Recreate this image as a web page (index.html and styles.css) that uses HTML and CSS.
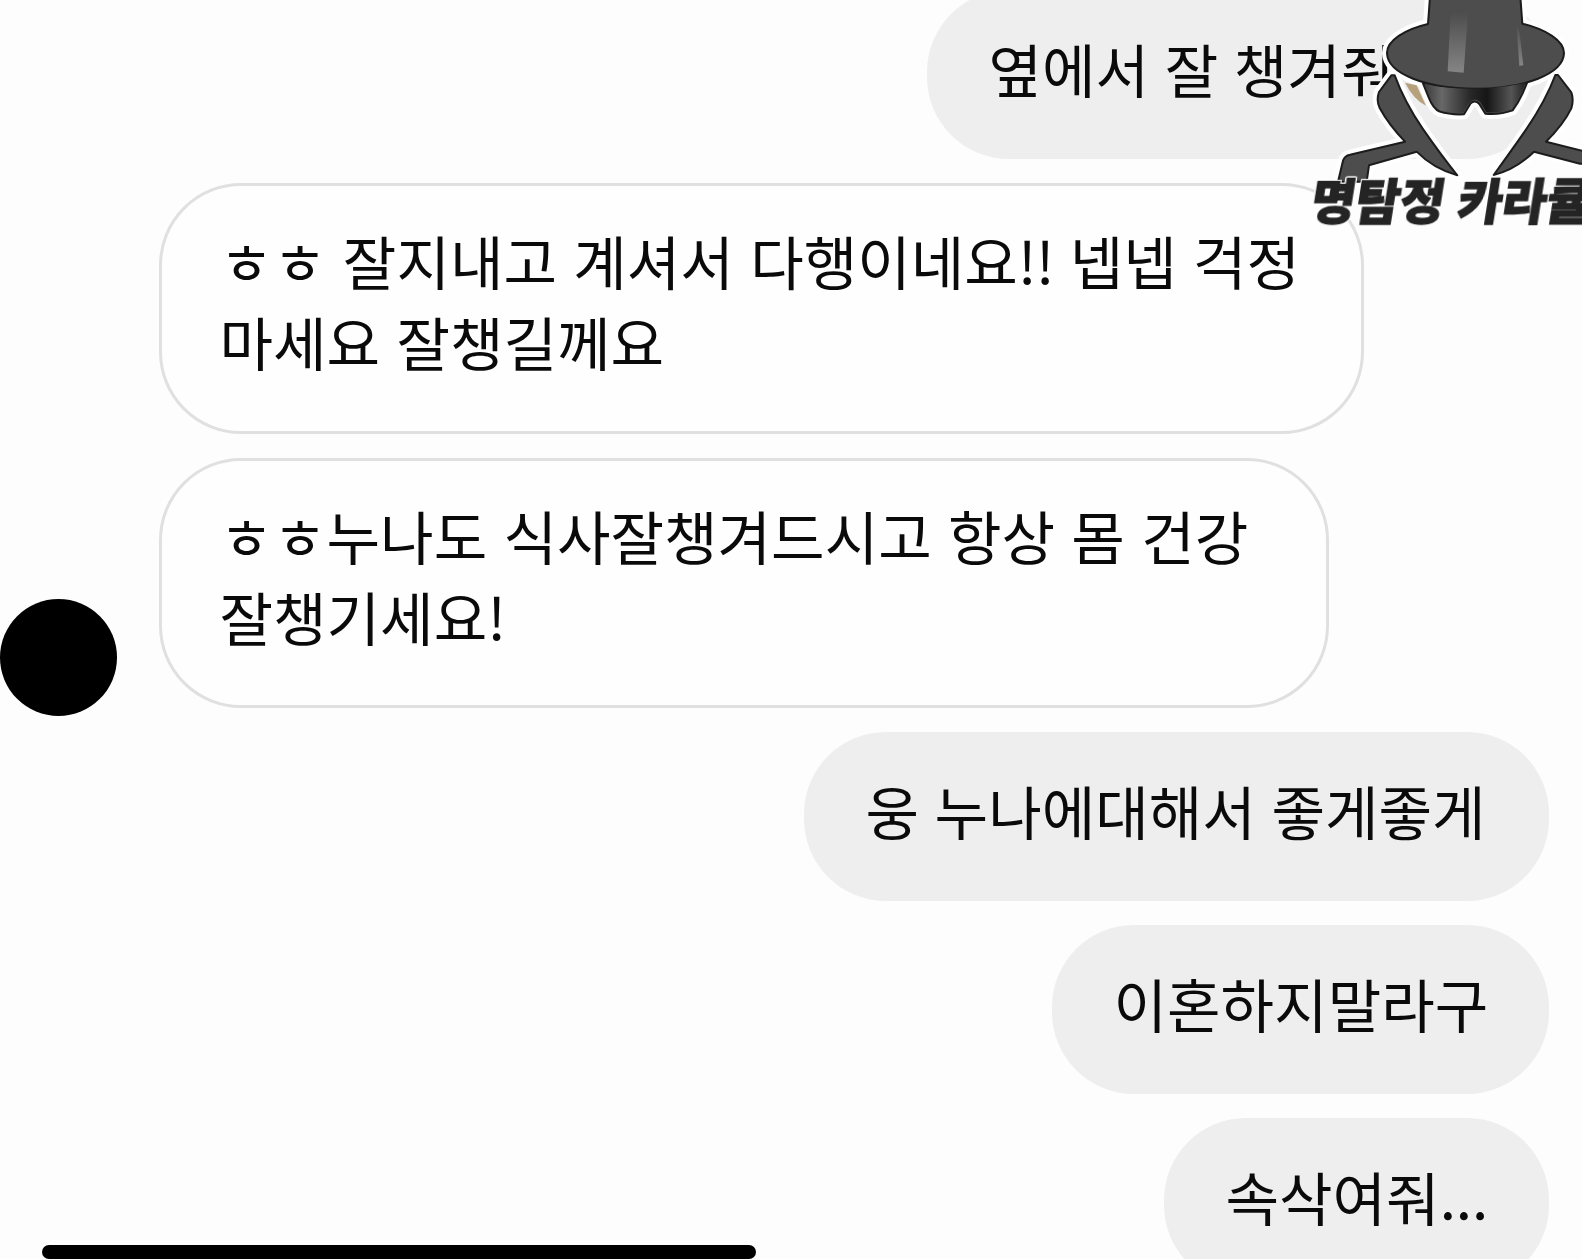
FILE: index.html
```html
<!DOCTYPE html>
<html lang="ko">
<head>
<meta charset="utf-8">
<title>메시지</title>
<link rel="stylesheet" href="styles.css">
</head>
<body>
<main class="screen">
  <section class="chat">
    <div class="row sent"><p class="bubble w-622">옆에서 잘 챙겨줘</p></div>
    <div class="row received"><p class="bubble w-1205">ㅎㅎ 잘지내고 계셔서 다행이네요<span class="marks">!!</span> 넵넵 걱정<br>마세요 잘챙길께요</p></div>
    <div class="row received">
      <span class="avatar"></span>
      <p class="bubble w-1170">ㅎㅎ누나도 식사잘챙겨드시고 항상 몸 건강<br>잘챙기세요!</p>
    </div>
    <div class="row sent"><p class="bubble w-745">웅 누나에대해서 좋게좋게</p></div>
    <div class="row sent"><p class="bubble w-497">이혼하지말라구</p></div>
    <div class="row sent"><p class="bubble w-385">속삭여줘...</p></div>
  </section>

  <svg class="detective" viewBox="0 0 846 720">
    <defs>
      <linearGradient id="shine" x1="0" y1="0" x2="0" y2="1">
        <stop offset="0" stop-color="#4d4d4d"/><stop offset="1" stop-color="#858585"/>
      </linearGradient>
      <linearGradient id="lens" x1="0" y1="0" x2="1" y2="0">
        <stop offset="0" stop-color="#3c3c3c"/><stop offset=".17" stop-color="#686868"/><stop offset=".45" stop-color="#282828"/><stop offset=".62" stop-color="#161616"/><stop offset=".86" stop-color="#555"/><stop offset="1" stop-color="#222"/>
      </linearGradient>
      <g id="figure">
        <path d="M369 250 L386 292 Q399 326 419 335 Q450 345 492 343 L512 310 Q525 298 538 312 L556 341 Q600 345 638 331 Q654 310 668 280 L682 246 Z"/>
        <path d="M274 226 L237 276 Q228 300 239 324 Q266 374 315 425 L150 464 Q134 467 129 482 L114 545 L200 545 L207 496 L350 455 Q400 506 472 526 Q425 468 368 386 Q313 305 284 226 Z"/>
        <path d="M774 225 L814 277 Q822 300 814 325 Q790 374 738 425 L860 456 L860 492 L840 491 L702 455 Q646 510 581 525 Q627 462 678 389 Q738 300 766 225 Z"/>
        <path d="M390 -10 L384 72 C315 88 260 122 261 160 C263 222 380 266 526 266 C674 266 790 222 792 160 C793 122 737 88 667 71 L661 -10 Z"/>
      </g>
    </defs>
    <use href="#figure" class="halo"/>
    <path d="M315 248 L350 256 L378 317 Q340 298 315 248Z" fill="#b7a17d"/>
    <use href="#figure" class="ink"/>
    <path d="M374 254 L390 292 Q402 322 421 331 Q450 339 489 338 L509 306 Q525 290 541 307 L559 337 Q600 340 635 327 Q650 308 664 279 L676 249 Q526 281 374 254Z" fill="url(#lens)"/>
    <path d="M452 38 L504 38 L491 218 L443 214 Z" fill="url(#shine)"/>
    <path d="M649 70 L659 100 L670 196 L658 198 Z" fill="url(#shine)"/>
    <text class="name" transform="translate(26 658) skewX(-9)">명탐정 카라큘</text>
  </svg>
  <div class="home-bar"></div>
</main>
</body>
</html>
```
FILE: styles.css
```css
body {
  margin: 0;
  background: #fdfdfd;
  font-family: "Noto Sans CJK KR", sans-serif;
}

.screen {
  position: relative;
  width: 1582px;
  height: 1259px;
  overflow: hidden;
}

.chat {
  display: flex;
  flex-direction: column;
  gap: 24px;
  margin-top: -9.6px;
}

.row {
  display: flex;
  flex: none;
  align-items: flex-end;
}

.sent {
  justify-content: flex-end;
  padding-right: 33px;
}

.received {
  padding-left: 159px;
}

.bubble {
  box-sizing: border-box;
  flex: none;
  height: 169px;
  margin: 0;
  padding: 36.6px 0 0 61.5px;
  border-radius: 82px;
  background: #eee;
  color: #0a0a0a;
  font-size: 58.2px;
  line-height: 81px;
  word-spacing: -0.7px;
  white-space: nowrap;
}

.received .bubble {
  height: 250.3px;
  padding: 33px 0 0 57.5px;
  border: 3.5px solid #e0e0e0;
  background: #fefefe;
  word-spacing: 0;
}

.marks {
  letter-spacing: -1px;
}

.w-622 { width: 622px; }
.w-1205 { width: 1205px; }
.w-1170 { width: 1170px; }
.w-745 { width: 745px; }
.w-497 { width: 497px; }
.w-385 { width: 385px; }

.avatar {
  flex: none;
  width: 117px;
  height: 117px;
  margin: 0 42px -8px -159px;
  border-radius: 50%;
  background: #000;
}

.detective {
  position: absolute;
  top: 0;
  left: 1300px;
  width: 282px;
  height: 240px;
}

.halo {
  fill: #fff;
  stroke: #fff;
  stroke-width: 30;
  stroke-linejoin: round;
}

.ink {
  fill: #4d4d4d;
  stroke: #1c1c1c;
  stroke-width: 6;
  stroke-linejoin: round;
}

.name {
  fill: #242424;
  stroke: #242424;
  stroke-width: 4;
  font-size: 145px;
  font-weight: 900;
  filter: drop-shadow(3px 0 0 #fff) drop-shadow(-3px 0 0 #fff) drop-shadow(0 3px 0 #fff) drop-shadow(0 -3px 0 #fff);
}

.home-bar {
  position: absolute;
  bottom: 0;
  left: 42px;
  width: 714px;
  height: 14px;
  border-radius: 7px;
  background: #000;
}
```
